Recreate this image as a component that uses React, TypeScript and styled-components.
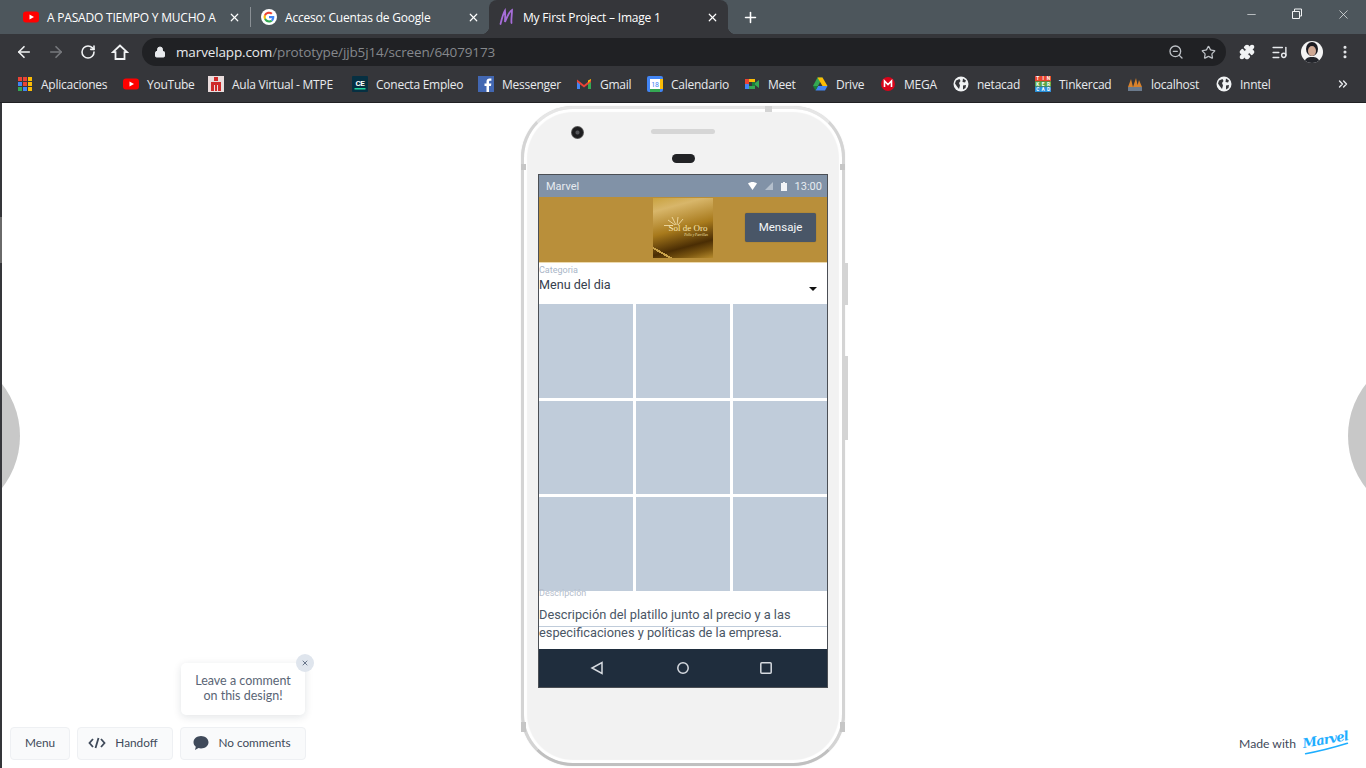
import { createGlobalStyle, styled } from "styled-components";
import { ArrowLeft, ArrowRight, RotateCw, Lock, ZoomOut, Star, Puzzle, ListMusic, MoreVertical, Plus, X, Minus, ChevronsRight } from "lucide-react";

const GlobalStyle = createGlobalStyle`
  html, body { margin: 0; padding: 0; height: 100%; background: #fff; overflow: hidden; }
  * { box-sizing: border-box; }
  #root { height: 100%; }
`;

const chromeFont = `"Open Sans", "Noto Sans", sans-serif`;
const uiFont = `Lato, "Open Sans", sans-serif`;

const Page = styled.div`
  width: 1366px;
  height: 768px;
  display: flex;
  flex-direction: column;
  overflow: hidden;
  font-family: ${chromeFont};
`;

/* browser top */
const TabStrip = styled.div`
  height: 34px;
  flex: none;
  background: #4d565c;
  display: flex;
  align-items: stretch;
  padding-left: 13px;
  color: #fff;
`;
const Tab = styled.div<{ $active?: boolean; $w: number }>`
  width: ${(p) => p.$w}px;
  display: flex;
  align-items: center;
  gap: 8px;
  padding: 0 9px 0 10px;
  font-size: 12px;
  letter-spacing: -0.2px;
  white-space: nowrap;
  border-radius: ${(p) => (p.$active ? "8px 8px 0 0" : "0")};
  background: ${(p) => (p.$active ? "#35363a" : "transparent")};
  position: relative;
  ${(p) =>
    p.$active &&
    `
    &::before, &::after {
      content: "";
      position: absolute;
      bottom: 0;
      width: 8px;
      height: 8px;
    }
    &::before { left: -8px; background: radial-gradient(circle at 0 0, transparent 8px, #35363a 8.5px); }
    &::after { right: -8px; background: radial-gradient(circle at 100% 0, transparent 8px, #35363a 8.5px); }
  `}
`;
const TabTitle = styled.span`
  flex: 1;
  min-width: 0;
`;
const TabDivider = styled.div`
  width: 1px;
  height: 20px;
  margin-top: 7px;
  background: #8a9095;
`;
const NewTab = styled.div`
  width: 34px;
  display: flex;
  align-items: center;
  justify-content: center;
  margin-left: 5px;
`;
const WindowButtons = styled.div`
  margin-left: auto;
  display: flex;
  align-items: flex-start;
  padding-top: 6px;
`;
const WindowButton = styled.div`
  width: 46px;
  height: 16px;
  display: flex;
  align-items: center;
  justify-content: center;
  color: #f1f3f4;
`;
const Toolbar = styled.div`
  height: 36px;
  flex: none;
  background: #35363a;
  display: flex;
  align-items: center;
  padding-left: 14px;
  color: #e8eaed;
`;
const NavButton = styled.div<{ $dim?: boolean }>`
  width: 32px;
  height: 28px;
  display: flex;
  align-items: center;
  justify-content: center;
  color: ${(p) => (p.$dim ? "#77797d" : "#f1f3f4")};
`;
const NavGroup = styled.div`
  display: flex;
  margin-right: 6px;
  margin-left: -6px;
`;
const Omnibox = styled.div`
  width: 1084px;
  height: 28px;
  border-radius: 14px;
  background: #202124;
  display: flex;
  align-items: center;
  padding: 0 10px 0 12px;
  font-size: 13.5px;
  letter-spacing: -0.13px;
`;
const Host = styled.span`
  color: #e8eaed;
  margin-left: 10px;
`;
const UrlPath = styled.span`
  color: #85888c;
`;
const OmniIcons = styled.div`
  margin-left: auto;
  display: flex;
  gap: 17px;
  align-items: center;
  color: #bdc1c6;
`;
const ToolIcons = styled.div`
  display: flex;
  align-items: center;
  margin-left: 5px;
`;
const ToolIcon = styled.div`
  width: 32.500px;
  display: flex;
  justify-content: center;
  align-items: center;
`;
const BookmarksBar = styled.div`
  height: 33px;
  flex: none;
  background: #35363a;
  display: flex;
  align-items: center;
  padding: 0 0 4px 17px;
  font-size: 12px;
  letter-spacing: -0.25px;
  color: #e8eaed;
  border-bottom: 1px solid #202124;
  position: relative;
`;
const Bookmark = styled.div<{ $w: number }>`
  width: ${(p) => p.$w}px;
  flex: none;
  display: flex;
  align-items: center;
  gap: 8px;
  white-space: nowrap;
`;
const MoreBookmarks = styled.div`
  position: absolute;
  right: 16px;
  top: 7px;
  color: #e8eaed;
`;

/* page area */
const Stage = styled.main`
  flex: 1;
  position: relative;
  overflow: hidden;
  display: flex;
  justify-content: center;
  align-items: flex-start;
  padding-top: 3px;
  background: #fff;
  font-family: Roboto, sans-serif;
`;
const EdgeStrip = styled.div`
  position: absolute;
  left: 0;
  top: 0;
  bottom: 0;
  width: 2px;
  background: linear-gradient(#35363a 114px, #6a6a6a 114px 160px, #35363a 160px);
  z-index: 2;
`;
const SideArrow = styled.div<{ $side: "left" | "right" }>`
  position: absolute;
  top: 249px;
  ${(p) => p.$side}: ${(p) => (p.$side === "left" ? -148 : -150)}px;
  width: 168px;
  height: 168px;
  border-radius: 50%;
  background: #c8c8c8;
`;
const PhoneBody = styled.div`
  width: 324px;
  height: 660px;
  flex: none;
  border-radius: 52px;
  background: #f2f2f2;
  border: 3px solid;
  border-color: #e6e6e6 #d4d4d4 #c0c0c0;
  box-shadow: inset 0 0 1px 3px #fff, 0 0 1px #d0d0d0;
  padding: 65px 14px 0;
  position: relative;
`;
const SideKey = styled.div<{ $top: number; $h: number }>`
  position: absolute;
  right: -6px;
  top: ${(p) => p.$top}px;
  height: ${(p) => p.$h}px;
  width: 3px;
  background: #d4d4d4;
`;
const AntennaBand = styled.div<{ $top: number; $h: number; $side: "left" | "right" }>`
  position: absolute;
  ${(p) => p.$side}: -3px;
  top: ${(p) => p.$top}px;
  width: 5px;
  height: ${(p) => p.$h}px;
  background: #c6c6c6;
`;
const TopBand = styled.div`
  position: absolute;
  left: 241px;
  top: -3px;
  width: 7px;
  height: 6px;
  background: #d4d4d4;
`;
const Camera = styled.div`
  position: absolute;
  left: 47px;
  top: 17px;
  width: 13px;
  height: 13px;
  border-radius: 50%;
  background: radial-gradient(circle, #55565a 0 1.5px, #1e1e20 2.5px 5px, #555 6px);
`;
const Speaker = styled.div`
  position: absolute;
  left: 127px;
  top: 20px;
  width: 64px;
  height: 5px;
  border-radius: 3px;
  background: #d6d6d6;
`;
const Sensor = styled.div`
  position: absolute;
  left: 148px;
  top: 45px;
  width: 23px;
  height: 9px;
  border-radius: 5px;
  background: #222326;
`;
const Screen = styled.div`
  width: 290px;
  height: 514px;
  border: 1px solid #4b4f55;
  background: #fff;
  display: flex;
  flex-direction: column;
`;
const StatusBar = styled.div`
  height: 22px;
  flex: none;
  background: #8192a7;
  color: #e6ebf0;
  font-size: 11px;
  display: flex;
  align-items: center;
  padding: 0 5px 0 7px;
`;
const StatusRight = styled.div`
  margin-left: auto;
  display: flex;
  align-items: center;
  gap: 8px;
`;
const AppHeader = styled.div`
  height: 66px;
  flex: none;
  background: #b98f3a;
  display: flex;
  justify-content: flex-end;
  align-items: flex-start;
  padding-right: 11px;
  position: relative;
  border-bottom: 1px solid #ecd9ae;
`;
const LogoTile = styled.div`
  position: absolute;
  left: 114px;
  top: 1px;
  width: 60px;
  height: 60px;
  background:
    linear-gradient(30deg, transparent 9.5%, #c9a24a 9.5% 12%, transparent 12%),
    linear-gradient(165deg, #c9a23f 0%, #d8b66a 18%, #a87a1c 50%, #4a2d04 76%, #7a5510 88%, #b58a2c 100%);
  color: #f7e6b4;
  font-family: "Liberation Serif", serif;
  font-size: 9px;
  text-align: center;
  padding-top: 26px;
  padding-left: 10px;
  line-height: 1;
`;
const LogoRays = styled.svg`
  position: absolute;
  left: 11px;
  top: 18px;
`;
const LogoSub = styled.div`
  font-size: 3.5px;
  font-style: italic;
  padding-left: 16px;
  margin-top: 1px;
`;
const MessageButton = styled.button`
  margin-top: 16px;
  width: 71px;
  height: 29px;
  padding: 0 0 2px;
  border: 0;
  border-radius: 2px;
  background: #495667;
  color: #f4f6f8;
  font: 400 11.5px Roboto, sans-serif;
  box-shadow: 0 0 1px rgba(0, 0, 0, 0.4);
`;
const SelectField = styled.div`
  height: 41px;
  flex: none;
  position: relative;
  padding-top: 2px;
`;
const FieldLabel = styled.div`
  font-size: 9px;
  line-height: 11px;
  color: #aab6c8;
`;
const SelectValue = styled.div`
  font-size: 12.6px;
  line-height: 18px;
  color: #36404d;
`;
const Caret = styled.div`
  position: absolute;
  right: 10px;
  top: 24px;
  width: 0;
  height: 0;
  border-left: 4px solid transparent;
  border-right: 4px solid transparent;
  border-top: 4px solid #111;
`;
const Gallery = styled.div`
  height: 287px;
  flex: none;
  display: grid;
  grid-template-columns: repeat(3, 1fr);
  grid-template-rows: repeat(3, 1fr);
  gap: 3px;
`;
const Thumb = styled.div`
  background: #c0ccda;
`;
const DescField = styled.div`
  flex: 1;
  position: relative;
`;
const DescLabel = styled(FieldLabel)`
  color: #b4bdcb;
  margin-top: -3px;
`;
const DescText = styled.div`
  margin-top: 7px;
  font-size: 12.8px;
  line-height: 18px;
  color: #4a5665;
  white-space: nowrap;
`;
const DescRule = styled.div`
  position: absolute;
  left: 0;
  right: 0;
  top: 35px;
  height: 1px;
  background: #c0ccda;
`;
const NavBar = styled.div`
  height: 38px;
  flex: none;
  background: #1f2d3d;
  display: grid;
  grid-template-columns: 84px 88px 78px;
  padding-left: 16px;
  justify-items: center;
  align-items: center;
`;

/* marvel overlays */
const Tip = styled.div`
  position: absolute;
  left: 181px;
  top: 560px;
  width: 124px;
  height: 52px;
  background: #fff;
  border-radius: 5px;
  box-shadow: 0 2px 8px rgba(20, 30, 50, 0.12);
  font: 12.5px/15px ${uiFont};
  color: #5a6575;
  text-align: center;
  padding-top: 10px;
`;
const TipClose = styled.div`
  position: absolute;
  right: -9px;
  top: -9px;
  width: 18px;
  height: 18px;
  border-radius: 50%;
  background: #dfe5ed;
  color: #68758a;
  display: flex;
  align-items: center;
  justify-content: center;
`;
const BottomBar = styled.div`
  position: absolute;
  left: 10px;
  top: 624px;
  display: flex;
  gap: 7px;
`;
const BarButton = styled.div<{ $w: number; $shift?: number }>`
  width: ${(p) => p.$w}px;
  height: 33px;
  padding: 0 ${(p) => p.$shift ?? 0}px 2px 0;
  border: 1px solid #eef0f3;
  border-radius: 4px;
  background: #f9fafb;
  display: flex;
  align-items: center;
  justify-content: center;
  gap: 9px;
  font: 11.8px ${uiFont};
  color: #3f4a5a;
`;
const MadeWith = styled.div`
  position: absolute;
  right: 17px;
  top: 629px;
  display: flex;
  align-items: center;
  gap: 7px;
  font: 12.2px ${uiFont};
  color: #3f4a5a;
`;
const MarvelMark = styled.div`
  position: relative;
  width: 46px;
  height: 22px;
  font: italic 700 13px "DejaVu Serif", serif;
  letter-spacing: -0.8px;
  color: #1eaeff;
  transform: rotate(-10deg);
  line-height: 16px;
`;
const MarvelSwoosh = styled.svg`
  position: absolute;
  left: 0;
  top: 13px;
`;

const YouTubeIcon = () => (
  <svg width="16" height="16" viewBox="0 0 16 16">
    <rect y="2.5" width="16" height="11" rx="3" fill="#f00" />
    <path d="M6.5 5.5 11 8l-4.5 2.5z" fill="#fff" />
  </svg>
);
const GoogleIcon = () => (
  <svg width="16" height="16" viewBox="0 0 16 16">
    <circle cx="8" cy="8" r="8" fill="#fff" />
    <path d="M13.300 8.200c0-.4 0-.8-.1-1.100H8v2.100h3c-.1.7-.5 1.300-1.100 1.700l1.700 1.300c1-.9 1.700-2.300 1.700-4z" fill="#4285f4" />
    <path d="M8 13.500c1.400 0 2.700-.5 3.600-1.300l-1.700-1.300c-.5.300-1.100.5-1.900.5-1.400 0-2.700-1-3.100-2.300L3.100 10.200C4 12.200 5.900 13.500 8 13.500z" fill="#34a853" />
    <path d="M4.900 9.100a3.300 3.300 0 0 1 0-2.200L3.100 5.600a5.500 5.500 0 0 0 0 4.800z" fill="#fbbc05" />
    <path d="M8 4.700c.8 0 1.500.3 2.100.8l1.500-1.500A5.500 5.500 0 0 0 3.100 5.600l1.800 1.300C5.300 5.600 6.600 4.700 8 4.700z" fill="#ea4335" />
  </svg>
);
const MarvelTabIcon = () => (
  <svg width="16" height="18" viewBox="0 0 16 18" fill="none" stroke="#a66dd8" strokeWidth="1.800" strokeLinecap="round">
    <path d="M1.500 16 C3 10 5 4 6 2.500 C6.500 7 6 11 6 14 C8 9 11 3 13 2 C13 7 12 11 12.500 15" />
  </svg>
);
const AppsIcon = () => {
  const colors = ["#ea4335", "#ea4335", "#fbbc05", "#4285f4", "#ea4335", "#fbbc05", "#34a853", "#4285f4", "#fbbc05"];
  return (
    <svg width="16" height="16" viewBox="0 0 16 16">
      {colors.map((c, i) => (
        <rect key={i} x={1 + (i % 3) * 5} y={1 + Math.floor(i / 3) * 5} width="4" height="4" fill={c} />
      ))}
    </svg>
  );
};
const AulaIcon = () => (
  <svg width="16" height="16" viewBox="0 0 16 16">
    <rect width="16" height="16" fill="#e9dcdc" />
    <path d="M6 1h4v4H6zM3 6h10v3H3zM3 9h3v6H3zM10 9h3v6h-3zM7 9h2v6H7z" fill="#cf2a2a" />
  </svg>
);
const ConectaIcon = () => (
  <svg width="16" height="16" viewBox="0 0 16 16">
    <rect width="16" height="16" rx="1" fill="#063042" />
    <text x="8" y="10" textAnchor="middle" fontSize="8" fontWeight="700" fontFamily="Roboto, sans-serif" fill="#fff">CE</text>
    <rect x="2.500" y="12" width="11" height="1.500" fill="#22d6a0" />
  </svg>
);
const FacebookIcon = () => (
  <svg width="16" height="16" viewBox="0 0 16 16">
    <rect width="16" height="16" fill="#4267b2" />
    <path d="M11 16V10h2l.3-2.500H11V6c0-.7.3-1.200 1.200-1.200h1.200V2.600c-.3 0-1-.1-1.800-.1-1.900 0-3.100 1.100-3.100 3.200v1.800h-2V10h2v6z" fill="#fff" />
  </svg>
);
const GmailIcon = () => (
  <svg width="16" height="16" viewBox="0 0 16 16">
    <path d="M1 4v9h3V7z" fill="#4285f4" />
    <path d="M12 7v6h3V4z" fill="#34a853" />
    <path d="M1 3.500 8 9l7-5.500V6L8 11.500 1 6z" fill="#ea4335" />
    <path d="M12 7l3-3V3l-3 1.500z" fill="#fbbc05" />
  </svg>
);
const CalendarIcon = () => (
  <svg width="16" height="16" viewBox="0 0 16 16">
    <rect width="16" height="16" rx="2" fill="#4285f4" />
    <rect x="3" y="3" width="10" height="10" fill="#fff" />
    <rect x="13" y="3" width="3" height="10" fill="#fbbc05" />
    <rect x="3" y="13" width="10" height="3" fill="#34a853" />
    <text x="8" y="11" textAnchor="middle" fontSize="7" fontFamily="Roboto, sans-serif" fill="#4285f4">18</text>
  </svg>
);
const MeetIcon = () => (
  <svg width="16" height="16" viewBox="0 0 16 16">
    <rect x="1" y="3" width="4" height="5" fill="#ea4335" />
    <rect x="1" y="8" width="4" height="5" fill="#4285f4" />
    <rect x="5" y="3" width="6" height="3" fill="#fbbc05" />
    <rect x="5" y="10" width="6" height="3" fill="#34a853" />
    <rect x="8" y="6" width="3" height="4" fill="#188038" />
    <path d="M11 7l4-3v8l-4-3z" fill="#34a853" />
  </svg>
);
const DriveIcon = () => (
  <svg width="16" height="16" viewBox="0 0 16 16">
    <path d="M5.500 1.500h5L6 10H1z" fill="#34a853" />
    <path d="M5.500 1.500h5l5 8.500h-5z" fill="#fbbc05" />
    <path d="M3.500 14.500 6 10h9.500L13 14.500z" fill="#4285f4" />
    <path d="M1 10h5l-2.500 4.500z" fill="#188038" />
  </svg>
);
const MegaIcon = () => (
  <svg width="16" height="16" viewBox="0 0 16 16">
    <circle cx="8" cy="8" r="7" fill="#d9041a" />
    <path d="M4.500 11V5l3.500 3.500L11.500 5v6" fill="none" stroke="#fff" strokeWidth="1.600" />
  </svg>
);
const EarthIcon = () => (
  <svg width="16" height="16" viewBox="0 0 16 16">
    <circle cx="8" cy="8" r="7.500" fill="#f1f3f4" />
    <path d="M3 4.500 6.500 3 7.500 5 6 7l1 2.500-1 3.500-2-2.500L2 7.500zM10 2.500l3 2-1 2-2.500-.5zM10 9.500l3-.5-.5 3-2.500 1.500z" fill="#35363a" />
  </svg>
);
const TinkercadIcon = () => {
  const rows = [
    { fill: "#e8452c", letters: "TIN" },
    { fill: "#5aa845", letters: "KER" },
    { fill: "#2a8fd8", letters: "CAD" },
  ];
  return (
    <svg width="16" height="16" viewBox="0 0 15 15">
      {rows.map((r, y) => (
        <g key={r.letters}>
          <rect y={y * 5} width="15" height="5" fill={r.fill} />
          {r.letters.split("").map((l, x) => (
            <text key={l} x={2.500 + x * 5} y={4.200 + y * 5} textAnchor="middle" fontSize="4.500" fontWeight="700" fontFamily="Roboto, sans-serif" fill="#fff">{l}</text>
          ))}
        </g>
      ))}
    </svg>
  );
};
const XamppIcon = () => (
  <svg width="16" height="16" viewBox="0 0 16 16">
    <path d="M1 11 4 3l2 8zM6 11l3-9 2 9zM10 11l2-7 3 7z" fill="#d9822b" />
    <rect x="1" y="11" width="14" height="4" fill="#6b7a8c" />
  </svg>
);
const HomeIcon = () => (
  <svg width="18" height="18" viewBox="0 0 18 18" fill="none" stroke="#f1f3f4" strokeWidth="1.800" strokeLinejoin="miter">
    <path d="M9 2.500 2 9.200h2.500V16h9V9.200H16z" />
  </svg>
);
const AvatarIcon = () => (
  <svg width="22" height="22" viewBox="0 0 22 22">
    <defs>
      <clipPath id="avatar-clip">
        <circle cx="11" cy="11" r="11" />
      </clipPath>
    </defs>
    <g clipPath="url(#avatar-clip)">
      <rect width="22" height="22" fill="#f4f4f4" />
      <ellipse cx="11" cy="8" rx="6" ry="7" fill="#1c1c22" />
      <ellipse cx="11" cy="10" rx="4" ry="5" fill="#cfa893" />
      <path d="M3 22c1-5 4-6 8-6s7 1 8 6z" fill="#23252b" />
    </g>
  </svg>
);

const bookmarks = [
  { w: 106, label: "Aplicaciones", icon: <AppsIcon /> },
  { w: 85, label: "YouTube", icon: <YouTubeIcon /> },
  { w: 144, label: "Aula Virtual - MTPE", icon: <AulaIcon /> },
  { w: 126, label: "Conecta Empleo", icon: <ConectaIcon /> },
  { w: 98, label: "Messenger", icon: <FacebookIcon /> },
  { w: 71, label: "Gmail", icon: <GmailIcon /> },
  { w: 97, label: "Calendario", icon: <CalendarIcon /> },
  { w: 68, label: "Meet", icon: <MeetIcon /> },
  { w: 68, label: "Drive", icon: <DriveIcon /> },
  { w: 73, label: "MEGA", icon: <MegaIcon /> },
  { w: 82, label: "netacad", icon: <EarthIcon /> },
  { w: 92, label: "Tinkercad", icon: <TinkercadIcon /> },
  { w: 89, label: "localhost", icon: <XamppIcon /> },
  { w: 70, label: "Inntel", icon: <EarthIcon /> },
];

export default function App() {
  return (
    <Page>
      <GlobalStyle />
      <TabStrip>
        <Tab $w={237}>
          <YouTubeIcon />
          <TabTitle>A PASADO TIEMPO Y MUCHO A</TabTitle>
          <X size={13} strokeWidth={2.2} />
        </Tab>
        <TabDivider />
        <Tab $w={238}>
          <GoogleIcon />
          <TabTitle>Acceso: Cuentas de Google</TabTitle>
          <X size={13} strokeWidth={2.2} />
        </Tab>
        <Tab $active $w={239}>
          <MarvelTabIcon />
          <TabTitle>My First Project – Image 1</TabTitle>
          <X size={13} strokeWidth={2.2} />
        </Tab>
        <NewTab>
          <Plus size={17} strokeWidth={2.2} />
        </NewTab>
        <WindowButtons>
          <WindowButton><Minus size={13} strokeWidth={1.2} /></WindowButton>
          <WindowButton>
            <svg width="12" height="12" viewBox="0 0 12 12" fill="none" stroke="#f1f3f4">
              <path d="M3.500 3V1h7v7H8.500M1.500 3.500h7v7h-7z" />
            </svg>
          </WindowButton>
          <WindowButton><X size={15} strokeWidth={1.1} /></WindowButton>
        </WindowButtons>
      </TabStrip>
      <Toolbar>
        <NavGroup>
          <NavButton><ArrowLeft size={18} strokeWidth={2.2} /></NavButton>
          <NavButton $dim><ArrowRight size={18} strokeWidth={2.2} /></NavButton>
          <NavButton><RotateCw size={16} strokeWidth={2.4} /></NavButton>
          <NavButton><HomeIcon /></NavButton>
        </NavGroup>
        <Omnibox>
          <Lock size={12} fill="#e8eaed" strokeWidth={2} />
          <Host>marvelapp.com</Host>
          <UrlPath>/prototype/jjb5j14/screen/64079173</UrlPath>
          <OmniIcons>
            <ZoomOut size={16} />
            <Star size={15} />
          </OmniIcons>
        </Omnibox>
        <ToolIcons>
          <ToolIcon><Puzzle size={16} fill="#f1f3f4" color="#f1f3f4" /></ToolIcon>
          <ToolIcon><ListMusic size={17} /></ToolIcon>
          <ToolIcon><AvatarIcon /></ToolIcon>
          <ToolIcon><MoreVertical size={16} strokeWidth={2.6} /></ToolIcon>
        </ToolIcons>
      </Toolbar>
      <BookmarksBar>
        {bookmarks.map((b) => (
          <Bookmark key={b.label} $w={b.w}>
            {b.icon}
            <span>{b.label}</span>
          </Bookmark>
        ))}
        <MoreBookmarks><ChevronsRight size={14} strokeWidth={2.4} /></MoreBookmarks>
      </BookmarksBar>
      <Stage>
        <EdgeStrip />
        <SideArrow $side="left" />
        <SideArrow $side="right" />
        <PhoneBody>
          <TopBand />
          <AntennaBand $side="left" $top={55} $h={6} />
          <AntennaBand $side="right" $top={55} $h={6} />
          <AntennaBand $side="left" $top={613} $h={10} />
          <AntennaBand $side="right" $top={613} $h={10} />
          <SideKey $top={154} $h={42} />
          <SideKey $top={247} $h={84} />
          <Camera />
          <Speaker />
          <Sensor />
          <Screen>
            <StatusBar>
              Marvel
              <StatusRight>
                <svg width="9" height="8" viewBox="0 0 9 8"><path d="M0 1.500C2.500-.5 6.500-.5 9 1.500L4.500 8z" fill="#fff" /></svg>
                <svg width="8" height="8" viewBox="0 0 8 8"><path d="M0 8 8 0v8z" fill="#b4bfcc" /></svg>
                <svg width="6" height="9" viewBox="0 0 6 9"><path d="M2 0h2v1h2v8H0V1h2z" fill="#f2f4f7" /></svg>
                <span>13:00</span>
              </StatusRight>
            </StatusBar>
            <AppHeader>
              <LogoTile>
                <LogoRays width="24" height="10" viewBox="0 0 24 10" stroke="#f7e6b4" strokeWidth="0.8">
                  <path d="M12 9 8 1M13 9l1-8M14 9l5-6M11 9 4 4M0 9.500h9" />
                </LogoRays>
                Sol de Oro
                <LogoSub>Pollo y Parrillas</LogoSub>
              </LogoTile>
              <MessageButton>Mensaje</MessageButton>
            </AppHeader>
            <SelectField>
              <FieldLabel>Categoria</FieldLabel>
              <SelectValue>Menu del dia</SelectValue>
              <Caret />
            </SelectField>
            <Gallery>
              {Array.from({ length: 9 }).map((_, i) => (
                <Thumb key={i} />
              ))}
            </Gallery>
            <DescField>
              <DescLabel>Descripción</DescLabel>
              <DescText>
                Descripción del platillo junto al precio y a las
                <br />
                especificaciones y políticas de la empresa.
              </DescText>
              <DescRule />
            </DescField>
            <NavBar>
              <svg width="14" height="14" viewBox="0 0 14 14" fill="none" stroke="#d6dae0" strokeWidth="1.500"><path d="M12 1.500v11L2 7z" /></svg>
              <svg width="14" height="14" viewBox="0 0 14 14" fill="none" stroke="#d6dae0" strokeWidth="1.500"><circle cx="7" cy="7" r="5.200" /></svg>
              <svg width="14" height="14" viewBox="0 0 14 14" fill="none" stroke="#d6dae0" strokeWidth="1.500"><rect x="1.800" y="1.800" width="10.400" height="10.400" rx="1" /></svg>
            </NavBar>
          </Screen>
        </PhoneBody>
        <Tip>
          Leave a comment
          <br />
          on this design!
          <TipClose><X size={8} strokeWidth={3} /></TipClose>
        </Tip>
        <BottomBar>
          <BarButton $w={60}>Menu</BarButton>
          <BarButton $w={96} $shift={4}>
            <svg width="18" height="12" viewBox="0 0 18 12" fill="none" stroke="#3f4a5a" strokeWidth="1.800"><path d="M5 2 1.500 6 5 10M13 2l3.500 4L13 10M10.500 1 7.500 11" /></svg>
            Handoff
          </BarButton>
          <BarButton $w={126} $shift={2}>
            <svg width="16" height="14" viewBox="0 0 16 14"><path d="M8 0c4.200 0 7.500 2.800 7.500 6.300S12.200 12.500 8 12.500c-.9 0-1.800-.1-2.500-.4L2 14l.8-3.300C1.300 9.600.5 8 .5 6.300.5 2.800 3.800 0 8 0z" fill="#3f4a5a" /></svg>
            No comments
          </BarButton>
        </BottomBar>
        <MadeWith>
          Made with
          <MarvelMark>
            Marvel
            <MarvelSwoosh width="46" height="8" viewBox="0 0 46 8" fill="none" stroke="#1eaeff" strokeWidth="1.600" strokeLinecap="round">
              <path d="M1 5C12 5 28 4 44 2" />
            </MarvelSwoosh>
          </MarvelMark>
        </MadeWith>
      </Stage>
    </Page>
  );
}
